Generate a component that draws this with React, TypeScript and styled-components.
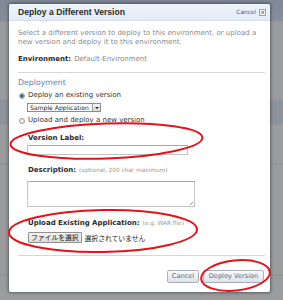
import styled, { createGlobalStyle } from 'styled-components'

const GlobalStyle = createGlobalStyle`
  html, body {
    margin: 0;
    padding: 0;
    background: #9a9b9d;
  }
  * {
    box-sizing: border-box;
  }
`

const Backdrop = styled.div`
  position: relative;
  width: 283px;
  height: 300px;
  overflow: hidden;
  padding: 4px 13px 8px 9px;
  background: linear-gradient(
    to bottom,
    #7e8896 0px,
    #86909c 21px,
    #9b9c9e 22px,
    #9b9c9e 99px,
    #8c939b 100px,
    #8c939b 124px,
    #9b9c9e 125px,
    #9b9c9e 163px,
    #8f9092 164px,
    #9b9c9e 165px,
    #9b9c9e 274px,
    #8f9092 275px,
    #9b9c9e 276px
  );
`

const Dialog = styled.div`
  width: 261px;
  height: 288px;
  background: #fff;
  border-radius: 2px;
  box-shadow: 0 0 3px 1px rgba(40, 40, 40, 0.55);
  display: flex;
  flex-direction: column;
  font-family: 'DejaVu Sans', Verdana, sans-serif;
  font-size: 7px;
  color: #333;
`

const Header = styled.div`
  height: 17px;
  background: linear-gradient(to bottom, #eef4fb, #e3ecf7);
  border-bottom: 1px solid #d3dde9;
  border-radius: 2px 2px 0 0;
  padding: 0 4px 0 9px;
  display: flex;
  align-items: center;
  justify-content: space-between;
`

const Title = styled.h1`
  margin: 0;
  font-family: 'Liberation Sans', Arial, sans-serif;
  font-weight: 700;
  font-size: 8.6px;
  color: #2a2a2a;
`

const CloseArea = styled.div`
  display: flex;
  align-items: center;
  gap: 3px;
`

const CancelLink = styled.span`
  font-size: 5.8px;
  color: #3b5f94;
`

const CloseBox = styled.span`
  width: 7px;
  height: 7px;
  border: 1px solid #9aa3ad;
  background: #f3f5f7;
  color: #555;
  font-size: 5px;
  line-height: 5px;
  text-align: center;
  font-weight: 700;
`

const Body = styled.div`
  flex: 1;
  padding: 0 5px 0 9px;
  display: flex;
  flex-direction: column;
`

const Intro = styled.p`
  margin: 8px 0 0;
  line-height: 9px;
  color: #8a8a8a;
`

const EnvRow = styled.div`
  margin-top: 8px;
  line-height: 9px;
  color: #888;
  b {
    color: #2a2a2a;
    font-weight: 700;
    margin-right: 3px;
  }
`

const Rule = styled.hr<{ gap: number }>`
  margin: ${(p) => p.gap}px 0 0;
  border: 0;
  border-top: 1px solid #d6d6d6;
  height: 0;
`

const SectionTitle = styled.h2`
  margin: 5px 0 0;
  font-size: 7.8px;
  line-height: 10px;
  font-weight: 400;
  color: #5d82ad;
`

const RadioRow = styled.label<{ gap: number }>`
  margin-top: ${(p) => p.gap}px;
  line-height: 9px;
  display: flex;
  align-items: center;
  gap: 3px;
  padding-left: 1px;
  color: #333;
`

const Radio = styled.span<{ checked?: boolean }>`
  width: 6px;
  height: 6px;
  border-radius: 50%;
  border: 1px solid #9a9a9a;
  background: ${(p) =>
    p.checked
      ? 'radial-gradient(circle, #2c5c86 0 1.4px, #b9cde0 1.8px)'
      : 'radial-gradient(circle, #fff, #d8d8d8)'};
`

const SelectBox = styled.div`
  margin: 3px 0 0 9px;
  width: 74px;
  height: 9px;
  border: 1px solid #8c8c8c;
  display: flex;
  align-items: stretch;
  background: #fff;
`

const SelectText = styled.span`
  flex: 1;
  padding-left: 2px;
  line-height: 7px;
  font-size: 6.1px;
  color: #222;
  white-space: nowrap;
  overflow: hidden;
`

const SelectArrow = styled.span`
  width: 8px;
  border-left: 1px solid #9a9a9a;
  background: linear-gradient(to bottom, #f6f6f6, #d9d9d9);
  display: flex;
  align-items: center;
  justify-content: center;
  &::after {
    content: '';
    border-left: 2px solid transparent;
    border-right: 2px solid transparent;
    border-top: 2.5px solid #222;
  }
`

const Field = styled.div<{ gap: number }>`
  margin: ${(p) => p.gap}px 0 0 10px;
  display: flex;
  flex-direction: column;
`

const FieldLabel = styled.div`
  line-height: 9px;
  font-weight: 700;
  color: #2a2a2a;
  small {
    font-weight: 400;
    font-size: 5.8px;
    color: #999;
    margin-left: 3px;
  }
`

const TextInput = styled.div<{ w: number; h: number; gap: number }>`
  margin: ${(p) => p.gap}px 0 0 -1px;
  width: ${(p) => p.w}px;
  height: ${(p) => p.h}px;
  border: 1px solid #c4c4c4;
  border-top-color: #a9a9a9;
  background: #fff;
`

const TextArea = styled(TextInput)`
  position: relative;
  &::after {
    content: '';
    position: absolute;
    right: 1px;
    bottom: 1px;
    width: 3px;
    height: 3px;
    background: linear-gradient(135deg, transparent 45%, #999 45%, #999 55%, transparent 55%);
  }
`

const FileRow = styled.div`
  margin-top: 4px;
  display: flex;
  align-items: center;
  gap: 3px;
  font-family: 'Noto Sans CJK JP', sans-serif;
  font-size: 6.8px;
  color: #222;
`

const FileButton = styled.span`
  height: 11px;
  padding: 0 2px;
  border: 1px solid #8f8f8f;
  border-radius: 1px;
  background: linear-gradient(to bottom, #f4f4f4, #dcdcdc);
  line-height: 9px;
  color: #111;
`

const Footer = styled.div`
  margin-top: 14px;
  display: flex;
  justify-content: flex-end;
  gap: 4px;
  padding-right: 1px;
`

const Button = styled.span<{ w: number }>`
  width: ${(p) => p.w}px;
  height: 13px;
  border: 1px solid #a9b0b8;
  border-radius: 2px;
  background: linear-gradient(to bottom, #fafbfc, #dde2e8);
  color: #4a6a95;
  font-size: 6.6px;
  line-height: 11px;
  text-align: center;
  white-space: nowrap;
`

const Marks = styled.svg`
  position: absolute;
  left: 0;
  top: 0;
  pointer-events: none;
`

export default function App(): JSX.Element {
  return (
    <>
      <GlobalStyle />
      <Backdrop>
        <Dialog>
          <Header>
            <Title>Deploy a Different Version</Title>
            <CloseArea>
              <CancelLink>Cancel</CancelLink>
              <CloseBox>×</CloseBox>
            </CloseArea>
          </Header>
          <Body>
            <Intro>
              Select a different version to deploy to this environment, or upload a
              new version and deploy it to this environment.
            </Intro>
            <EnvRow>
              <b>Environment:</b>Default-Environment
            </EnvRow>
            <Rule gap={8} />
            <SectionTitle>Deployment</SectionTitle>
            <RadioRow gap={3}>
              <Radio checked />
              Deploy an existing version
            </RadioRow>
            <SelectBox>
              <SelectText>Sample Application</SelectText>
              <SelectArrow />
            </SelectBox>
            <RadioRow gap={4}>
              <Radio />
              Upload and deploy a new version
            </RadioRow>
            <Field gap={9}>
              <FieldLabel>Version Label:</FieldLabel>
              <TextInput w={161} h={10} gap={2} />
            </Field>
            <Field gap={11}>
              <FieldLabel>
                Description:<small>(optional, 200 char maximum)</small>
              </FieldLabel>
              <TextArea w={168} h={26} gap={6} />
            </Field>
            <Field gap={12}>
              <FieldLabel>
                Upload Existing Application:<small>(e.g. WAR file)</small>
              </FieldLabel>
              <FileRow>
                <FileButton>ファイルを選択</FileButton>
                選択されていません
              </FileRow>
            </Field>
            <Rule gap={12} />
            <Footer>
              <Button w={32}>Cancel</Button>
              <Button w={61}>Deploy Version</Button>
            </Footer>
          </Body>
        </Dialog>
        <Marks width="283" height="300" viewBox="0 0 283 300">
          <g fill="none" stroke="#e3121b" strokeWidth="2">
            <ellipse cx="106.5" cy="141" rx="96" ry="17.5" transform="rotate(-2 106.5 141)" />
            <ellipse cx="103" cy="231" rx="94" ry="21" transform="rotate(-1 103 231)" />
            <ellipse cx="235.5" cy="275.5" rx="34.5" ry="15" transform="rotate(-6 235.5 275.5)" />
          </g>
        </Marks>
      </Backdrop>
    </>
  )
}
